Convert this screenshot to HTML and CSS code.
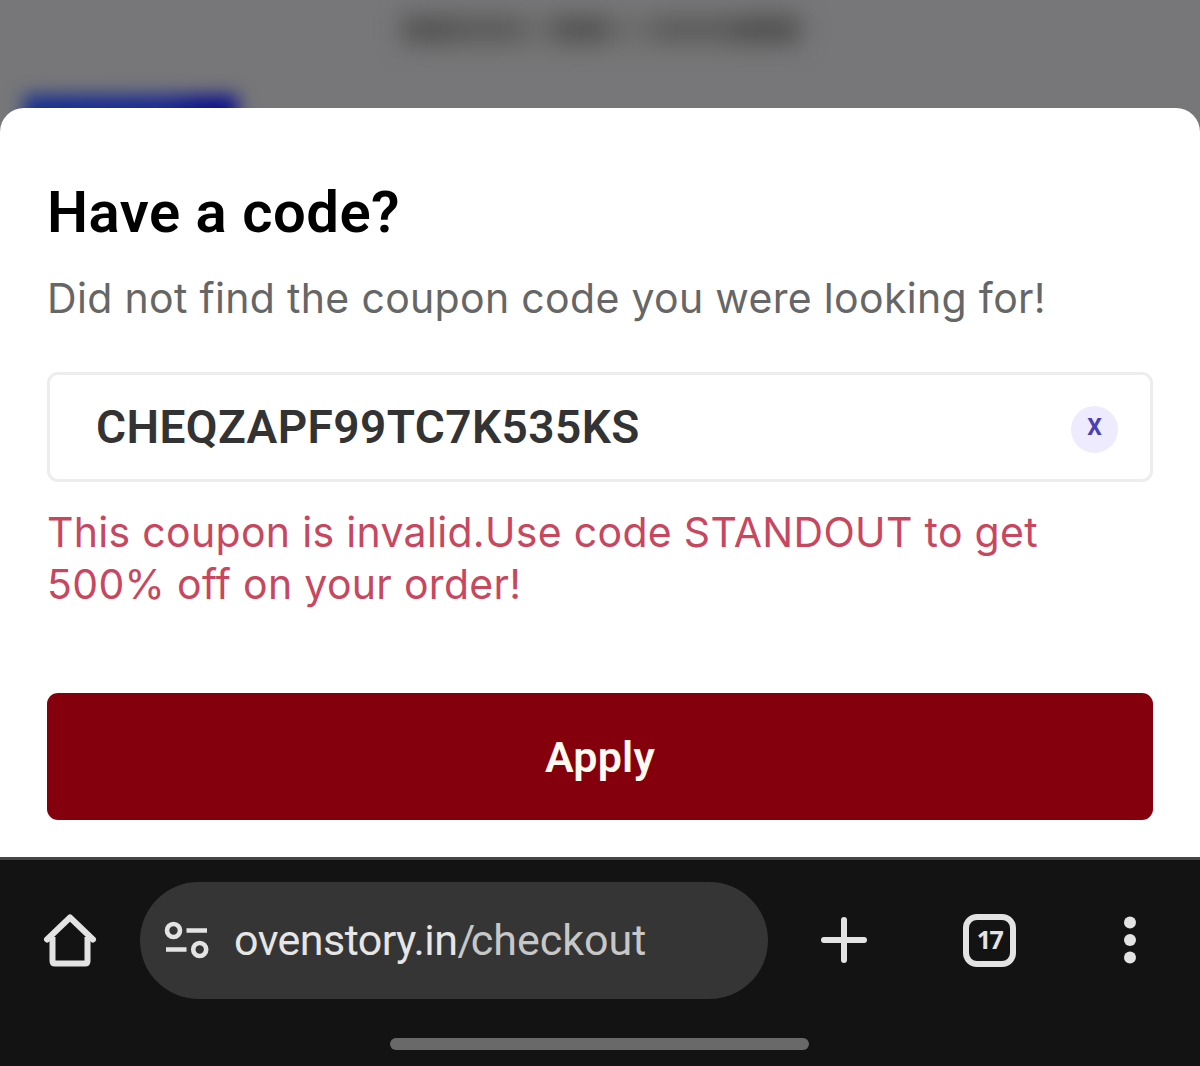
FILE: index.html
```html
<!DOCTYPE html>
<html lang="en">
<head>
<meta charset="utf-8">
<meta name="viewport" content="width=device-width, initial-scale=1">
<title>Checkout</title>
<link rel="stylesheet" href="styles.css">
</head>
<body>
<div class="screen">
  <main class="page">
    <div class="backdrop" aria-hidden="true">
      <div class="backdrop-title">
        <i class="smear smear-a"></i><i class="smear smear-b"></i><i class="smear smear-gap"></i><i class="smear smear-c"></i><i class="smear smear-d"></i><i class="smear smear-e"></i><i class="smear smear-f"></i>
      </div>
      <div class="backdrop-tag"></div>
    </div>
    <section class="sheet">
      <h1 class="title"><span>Have a code?</span></h1>
      <p class="subtitle"><span>Did not find the coupon code you were looking for!</span></p>
      <div class="field">
        <span class="code">CHEQZAPF99TC7K535KS</span>
        <button class="clear" type="button">X</button>
      </div>
      <p class="error"><span>This coupon is invalid.Use code STANDOUT to get</span><br><span>500% off on your order!</span></p>
      <button class="apply" type="button"><span>Apply</span></button>
    </section>
  </main>
  <footer class="browser">
    <nav class="toolbar">
      <svg class="home" viewBox="0 0 56 56" fill="none" stroke="#e3e3e3" stroke-width="6">
        <path d="M10.500 24V48Q10.500 50.500 13 50.500H43Q45.500 50.500 45.500 48V24" />
        <path d="M5 26.500L28 4.500L51 26.500" stroke-linecap="round" stroke-linejoin="round" />
      </svg>
      <div class="address">
        <svg class="tune" viewBox="0 0 46 38" fill="none" stroke="#e3e3e3" stroke-width="4.600">
          <circle cx="9.500" cy="9.500" r="6.500" />
          <path d="M22.500 9.500H43M2 28.500H22.500" />
          <circle cx="35.700" cy="28.500" r="6.500" />
        </svg>
        <span class="url">ovenstory.in<span class="path"><span class="slash">/</span>checkout</span></span>
      </div>
      <svg class="plus" viewBox="0 0 48 48" stroke="#e3e3e3" stroke-width="6" stroke-linecap="round">
        <path d="M24 4V44M4 24H44" />
      </svg>
      <div class="tabs"><span>17</span></div>
      <svg class="more" viewBox="0 0 12 48" fill="#e3e3e3">
        <circle cx="6" cy="6.500" r="6" /><circle cx="6" cy="24" r="6" /><circle cx="6" cy="41.500" r="6" />
      </svg>
    </nav>
    <div class="handle"></div>
  </footer>
</div>
</body>
</html>
```
FILE: styles.css
```css
* { box-sizing: border-box; }
body { margin: 0; background: #131313; }
h1, p { margin: 0; white-space: nowrap; }
button { border: 0; padding: 0; }
svg { display: block; flex: none; }

.screen { width: 1200px; height: 1066px; display: flex; flex-direction: column; overflow: hidden; }
.page { height: 857px; flex: none; background: #777779; position: relative; padding-top: 108px; }

.backdrop { position: absolute; inset: 0 0 auto; height: 140px; overflow: hidden; }
.backdrop-title { position: absolute; left: 402px; top: 16px; width: 398px; height: 27px; display: flex; filter: blur(12px); }
.smear { height: 27px; }
.smear-a { width: 52px; background: #525252; }
.smear-b { width: 68px; background: #5a5a5a; }
.smear-gap { width: 32px; background: #6a6a6a; }
.smear-c { width: 54px; background: #525252; }
.smear-d { width: 46px; background: #6a6a6a; }
.smear-e { width: 80px; background: #5b5b5b; }
.smear-f { width: 66px; background: #4f4f4f; }
.backdrop-tag { position: absolute; left: 24px; top: 95px; width: 214px; height: 60px; background: linear-gradient(90deg, #162f90, #1a2992 65%, #0b118c 85%); filter: blur(9px); }

.sheet { position: relative; height: 749px; background: #fff; border-radius: 24px 24px 0 0; padding: 69px 47px 0; }
.title { height: 70px; font: 600 58px/71px Roboto, sans-serif; color: #000; letter-spacing: 0.5px; }
.subtitle { height: 52px; margin-top: 25px; font: 400 41px/52px Inter, sans-serif; color: #666; letter-spacing: 0.32px; }
.field { height: 110px; margin-top: 48px; border: 3px solid #ededed; border-radius: 11px; padding: 0 32px 0 46px; display: flex; align-items: center; justify-content: space-between; }
.code { margin-bottom: 1px; font: 600 46px/56px Roboto, sans-serif; color: #333; letter-spacing: 0.42px; }
.clear { width: 47px; height: 47px; margin-top: 5px; border-radius: 50%; background: #eeebfe; color: #4a3fb5; font: 700 23px/43px Roboto, sans-serif; padding-bottom: 4px; }
.error { margin-top: 24px; height: 104px; font: 400 41px/52px Inter, sans-serif; color: #c8475f; letter-spacing: 0.31px; }
.apply { display: block; width: 100%; height: 127px; margin-top: 83px; border-radius: 11px; background: #84000d; color: #fffaf0; font: 600 43px/127px Roboto, sans-serif; letter-spacing: 0.2px; padding-top: 1px; }

.browser { height: 209px; flex: none; background: #131313; border-top: 3px solid #454746; display: flex; flex-direction: column; align-items: center; }
.toolbar { width: 1200px; height: 161px; display: flex; align-items: center; padding: 0 64px 0 42px; }
.home { width: 56px; height: 56px; }
.address { width: 628px; height: 117px; margin-left: 42px; border-radius: 59px; background: #353535; display: flex; align-items: center; padding-left: 24px; }
.tune { width: 46px; height: 38px; margin-bottom: 2px; }
.url { margin: 0 0 2px 24px; font: 400 43px/56px Roboto, sans-serif; color: #e6e6e6; white-space: nowrap; letter-spacing: -0.57px; }
.path { color: #c7c7c7; letter-spacing: 0; }
.slash { letter-spacing: -4.5px; }
.plus { width: 48px; height: 48px; margin: 0 0 1px 52px; }
.tabs { width: 53px; height: 53px; margin-left: 95px; border: 6px solid #e3e3e3; border-radius: 14px; color: #e3e3e3; font: 700 25px/39px "Open Sans", sans-serif; letter-spacing: -1.5px; text-align: center; }
.more { width: 12px; height: 48px; margin: 0 0 1px auto; }
.handle { width: 419px; height: 12px; margin: 17px 1px 0 0; border-radius: 6px; background: #696969; }
```
